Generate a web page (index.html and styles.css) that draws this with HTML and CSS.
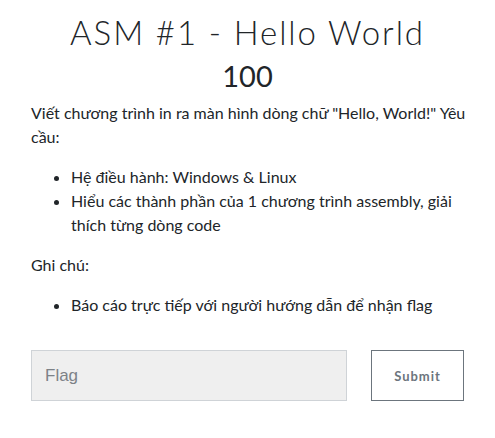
FILE: index.html
```html
<!DOCTYPE html>
<html lang="vi">
<head>
<meta charset="utf-8">
<link rel="stylesheet" href="styles.css">
</head>
<body>
<div class="modal">
  <h2 class="challenge-name">ASM #1 - Hello World</h2>
  <h3 class="challenge-value">100</h3>
  <div class="challenge-desc">
    <p>Viết chương trình in ra màn hình dòng chữ "Hello, World!" Yêu cầu:</p>
    <ul>
      <li>Hệ điều hành: Windows &amp; Linux</li>
      <li>Hiểu các thành phần của 1 chương trình assembly, giải thích từng dòng code</li>
    </ul>
    <p>Ghi chú:</p>
    <ul>
      <li>Báo cáo trực tiếp với người hướng dẫn để nhận flag</li>
    </ul>
  </div>
  <div class="submit-row">
    <input class="flag-input" type="text" placeholder="Flag">
    <button class="submit-btn" type="button">Submit</button>
  </div>
</div>
</body>
</html>
```

FILE: styles.css
```css
html, body {
  margin: 0;
  padding: 0;
  background: #fff;
}
body {
  font-family: Lato, "Noto Sans", sans-serif;
  color: #212529;
  font-size: 16px;
  line-height: 24px;
}
.modal {
  padding: 12px 31px 0 31px;
}
.challenge-name {
  margin: 0;
  text-align: center;
  font-family: Lato, sans-serif;
  font-weight: 300;
  font-size: 33px;
  line-height: 40px;
  letter-spacing: 1.9px;
  color: #212529;
}
.challenge-value {
  margin: 5px 0 0 0;
  text-align: center;
  font-family: Lato, sans-serif;
  font-weight: 400;
  font-size: 29px;
  line-height: 38px;
  color: #212529;
}
.challenge-desc {
  margin-top: 6px;
  margin-right: -10px;
}
.challenge-desc p {
  margin: 0 0 16px 0;
}
.challenge-desc ul {
  margin: 0 0 16px 0;
  padding-left: 40px;
}
.submit-row {
  display: flex;
  gap: 24px;
  margin-top: 33px;
}
.flag-input {
  flex: 1;
  min-width: 0;
  height: 51px;
  box-sizing: border-box;
  background: #efefef;
  border: 1px solid #cfd3d7;
  border-radius: 0;
  padding: 0 13px;
  font-family: "Liberation Sans", Arial, sans-serif;
  font-size: 17px;
  color: #495057;
  outline: none;
}
.flag-input::placeholder {
  color: #7d8287;
}
.submit-btn {
  width: 93px;
  height: 51px;
  box-sizing: border-box;
  background: #fff;
  border: 1px solid #6c757d;
  border-radius: 0;
  font-family: Lato, sans-serif;
  font-weight: 700;
  font-size: 13px;
  letter-spacing: 1px;
  color: #6c757d;
  padding: 0;
}
```
